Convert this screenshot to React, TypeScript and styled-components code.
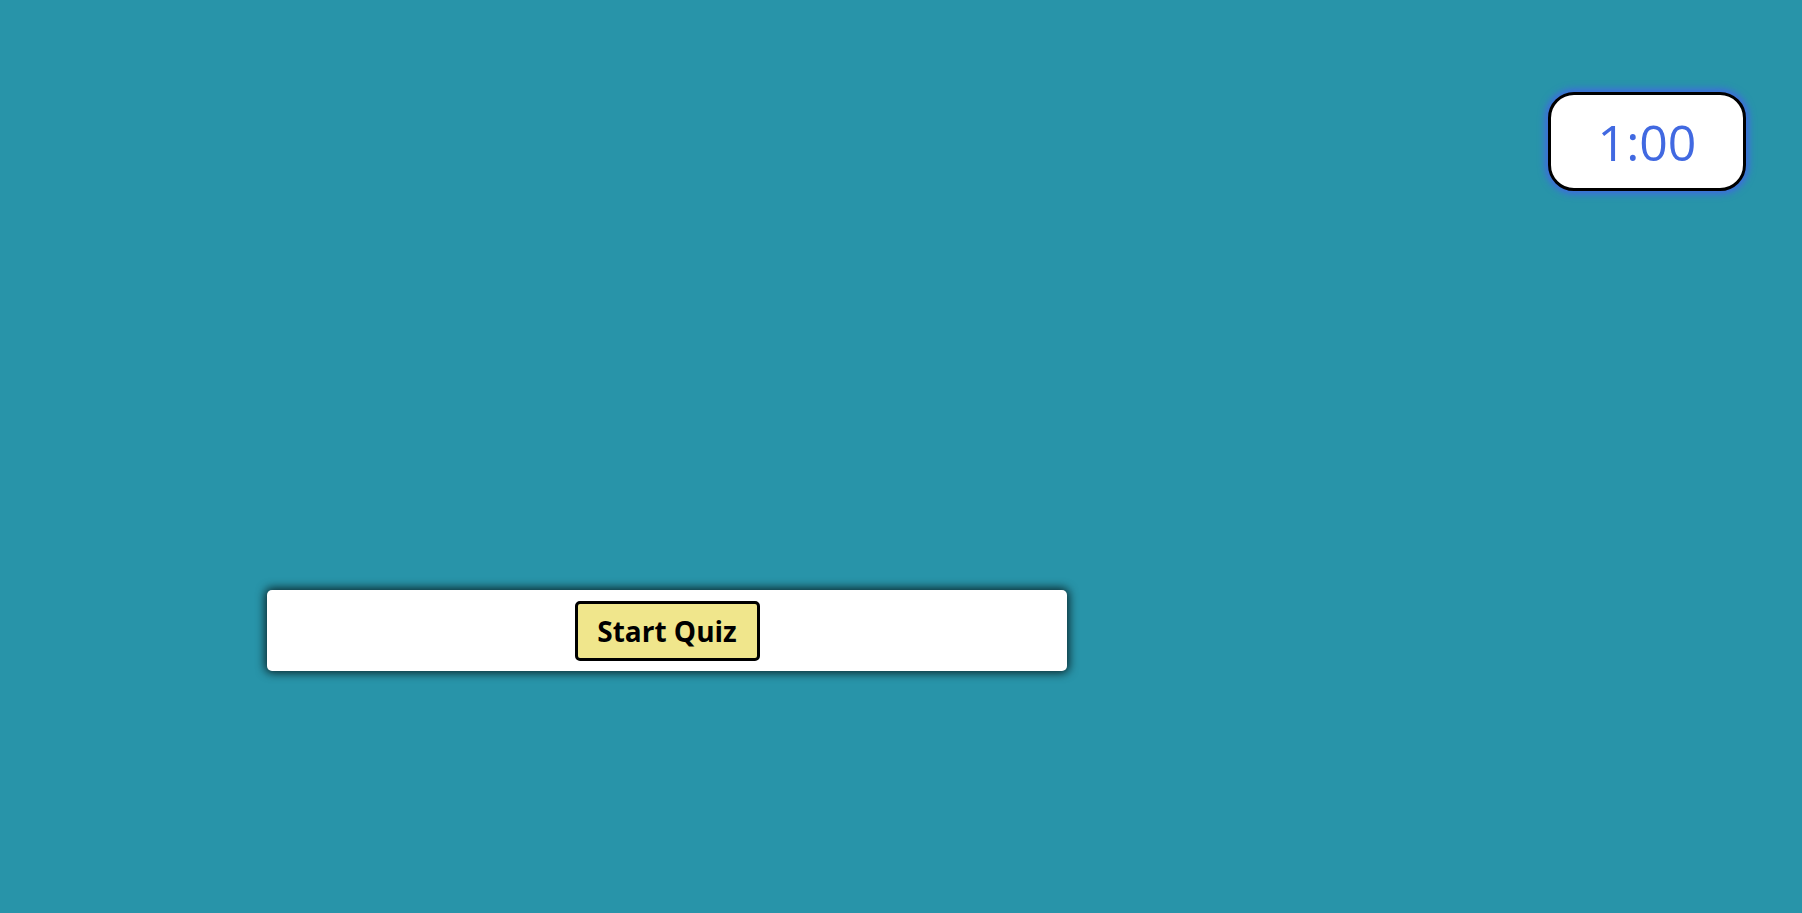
import React from "react";
import styled, { createGlobalStyle } from "styled-components";

const GlobalStyle = createGlobalStyle`
  html, body {
    margin: 0;
    padding: 0;
    background: #2894a9;
    height: 100%;
  }
  #root { min-height: 100vh; }
`;

const Page = styled.div`
  min-height: 913px;
  background: #2894a9;
  display: flex;
  flex-direction: column;
  box-sizing: border-box;
  padding: 92px 56px 0 267px;
`;

const Header = styled.header`
  display: flex;
  justify-content: flex-end;
`;

const Timer = styled.div`
  width: 198px;
  height: 99px;
  box-sizing: border-box;
  background: #ffffff;
  border: 3px solid #000;
  border-radius: 26px;
  box-shadow: 0 0 7px 3px #4169e1;
  display: flex;
  align-items: center;
  justify-content: center;
  color: #4169e1;
  font-family: "Open Sans", "Noto Sans", sans-serif;
  font-weight: 500;
  font-size: 50px;
  line-height: 1;
`;

const Card = styled.section`
  margin-top: 399px;
  width: 800px;
  height: 81px;
  box-sizing: border-box;
  background: #ffffff;
  border-radius: 5px;
  box-shadow: 0 0 10px 2px rgba(0, 0, 0, 0.75);
  display: flex;
  align-items: center;
  justify-content: center;
`;

const StartButton = styled.button`
  width: 185px;
  height: 60px;
  box-sizing: border-box;
  background: #f0e68c;
  border: 3px solid #000;
  border-radius: 5px;
  font-family: "Open Sans", "Noto Sans", sans-serif;
  font-weight: 700;
  font-size: 28px;
  color: #000;
  cursor: pointer;
  padding: 0;
  line-height: 1;
`;

export default function App() {
  return (
    <>
      <GlobalStyle />
      <Page>
        <Header>
          <Timer>1:00</Timer>
        </Header>
        <Card>
          <StartButton>Start Quiz</StartButton>
        </Card>
      </Page>
    </>
  );
}
